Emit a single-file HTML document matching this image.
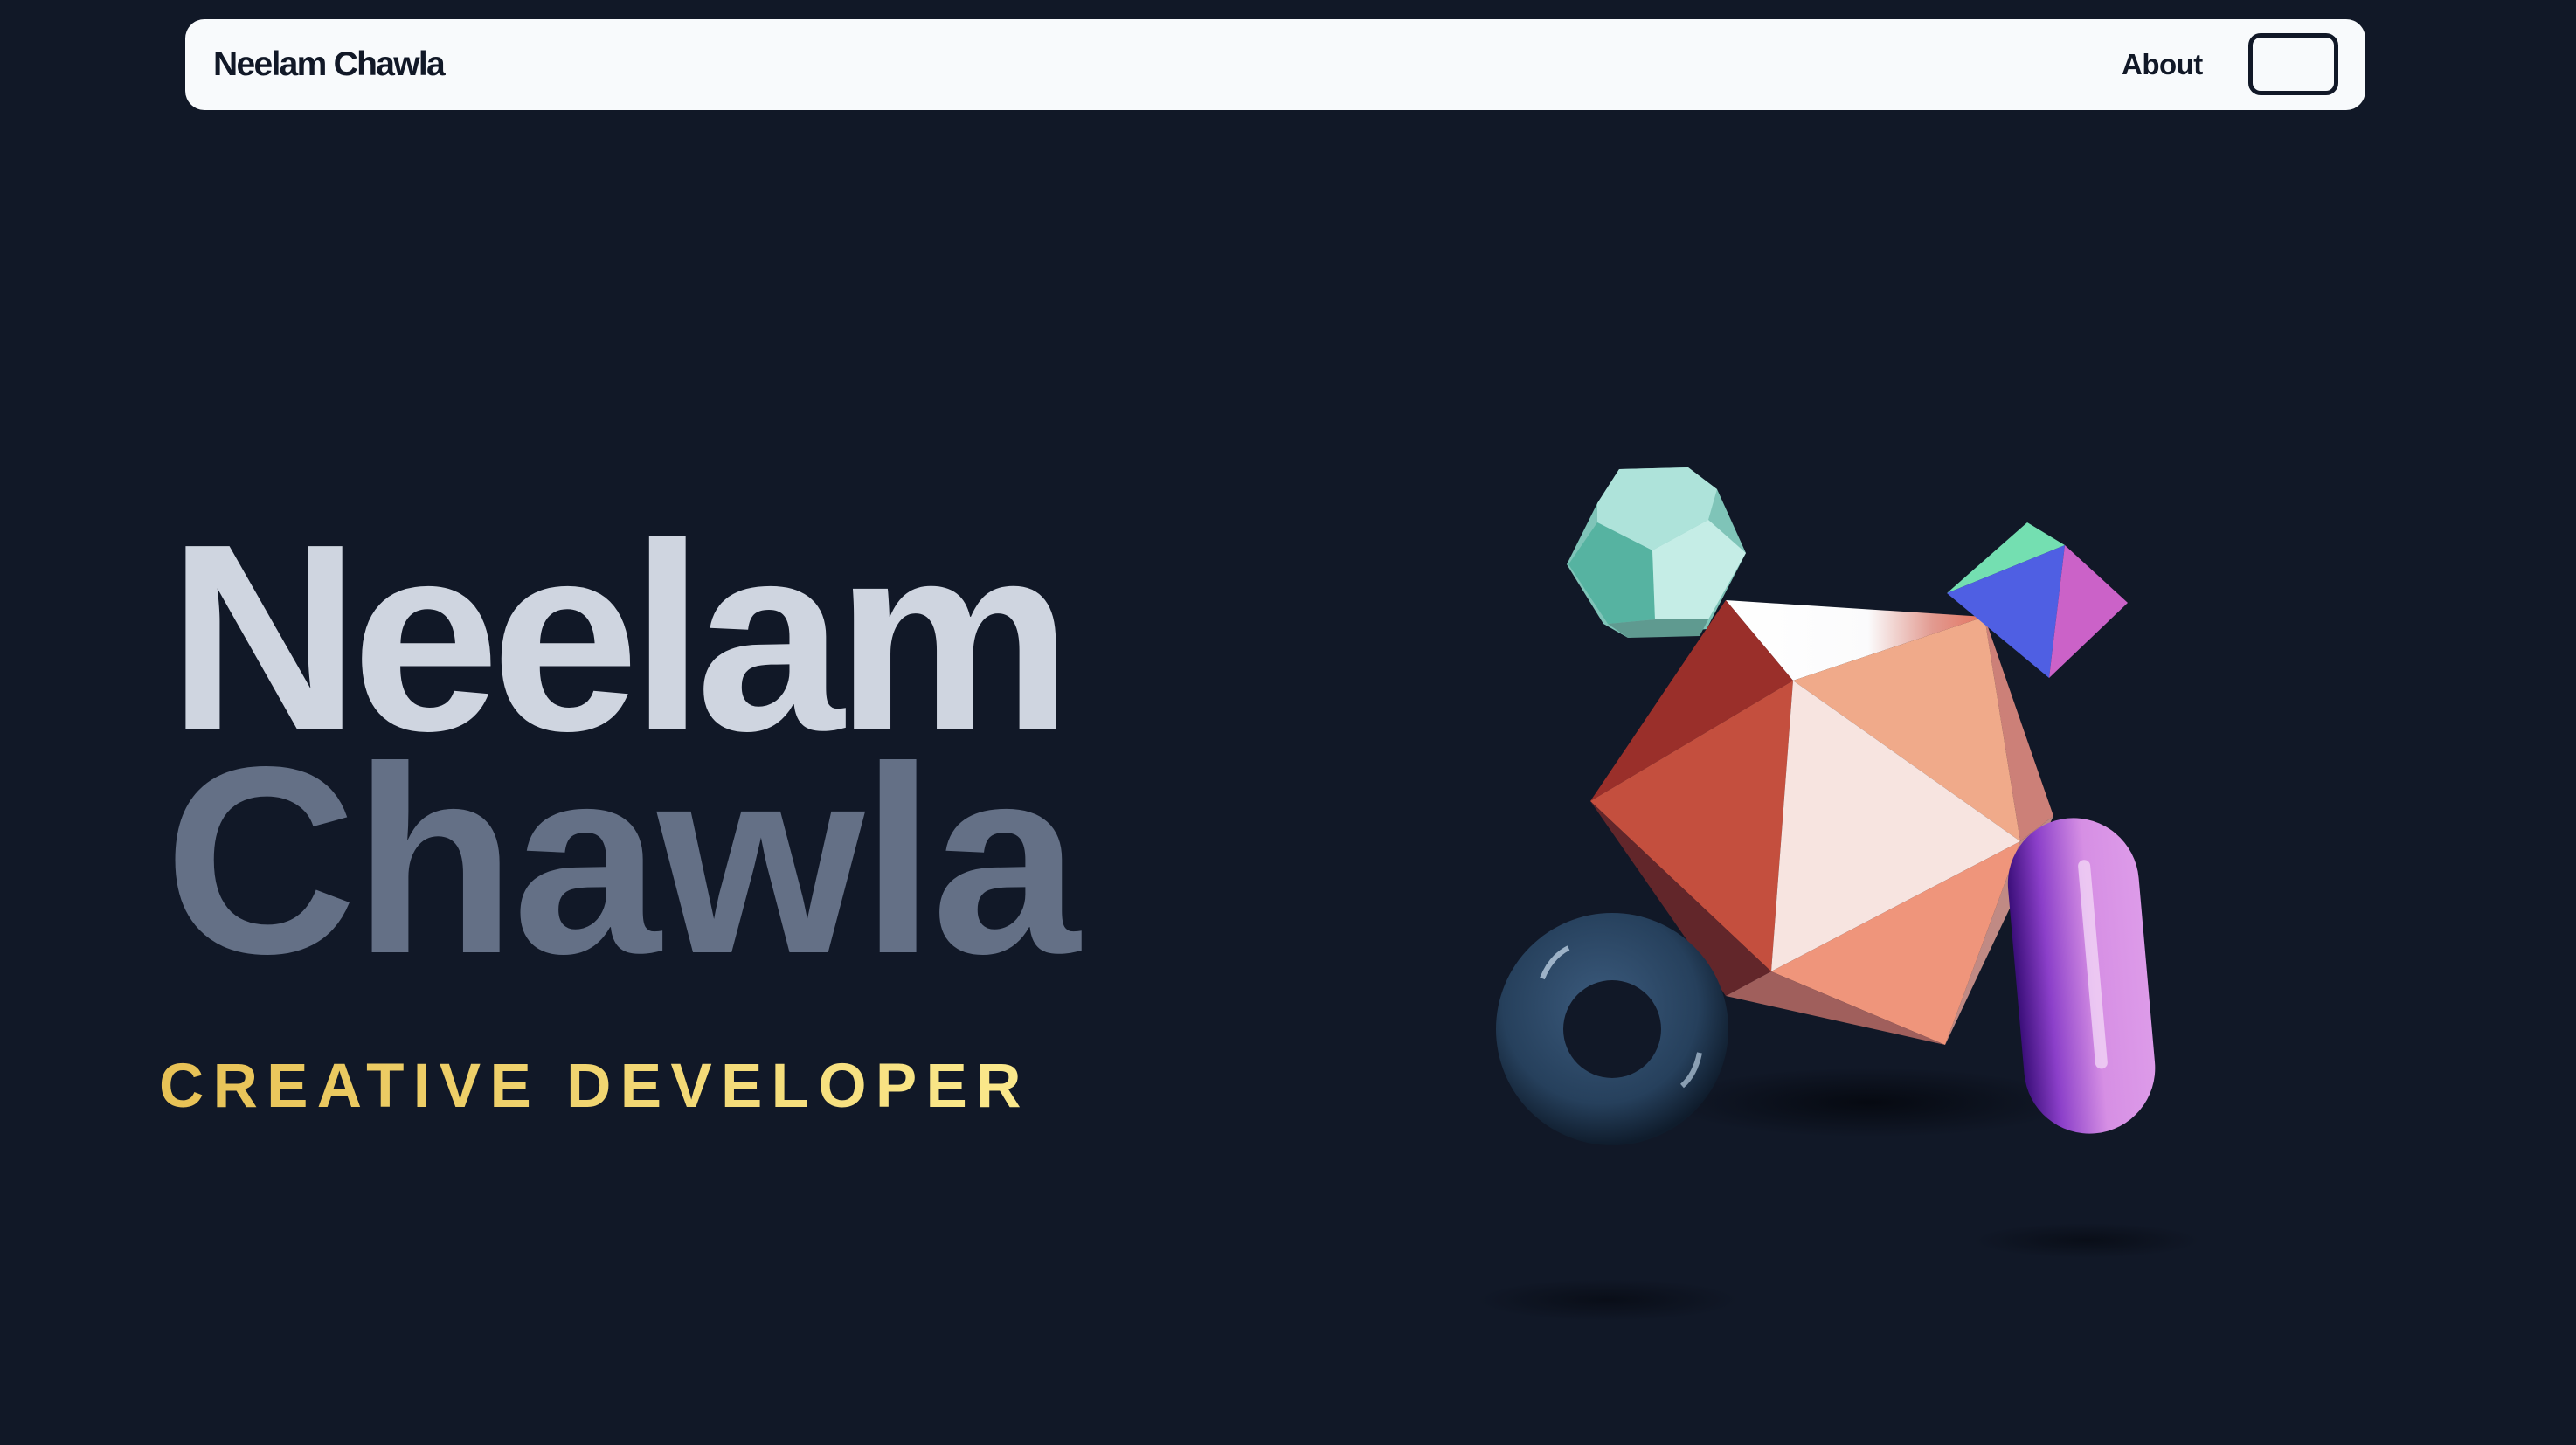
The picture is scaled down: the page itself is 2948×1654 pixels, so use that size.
<!DOCTYPE html>
<html><head><meta charset="utf-8"><style>
html,body{margin:0;padding:0;width:2948px;height:1654px;overflow:hidden;background:#111827;font-family:"Liberation Sans",sans-serif;}
.nav{position:absolute;left:212px;top:22px;width:2495px;height:104px;background:#f8fafc;border-radius:22px;}
.logo{position:absolute;left:244px;top:48px;font-size:39px;font-weight:bold;color:#111827;letter-spacing:-1.7px;line-height:52px;}
.about{position:absolute;left:2428px;top:54px;font-size:33px;font-weight:bold;color:#111827;line-height:40px;letter-spacing:-0.5px;}
.btn{position:absolute;left:2573px;top:38px;width:93px;height:61px;border:5px solid #111827;border-radius:14px;}
.big{position:absolute;font-weight:bold;font-size:305px;letter-spacing:-10px;line-height:1;}
.n1{left:192px;top:577px;color:#cfd5e0;}
.n2{left:188px;top:832px;color:#647086;letter-spacing:-4px;}
.sub{position:absolute;left:182px;top:1204px;font-size:71px;font-weight:bold;letter-spacing:10.3px;line-height:80px;background:linear-gradient(90deg,#e7c155,#fbe98c);-webkit-background-clip:text;color:transparent;}
svg{position:absolute;left:0;top:0;}
</style></head><body>
<div class="nav"></div>
<div class="logo">Neelam Chawla</div>
<div class="about">About</div>
<div class="btn"></div>
<div class="big n1">Neelam</div>
<div class="big n2">Chawla</div>
<div class="sub">CREATIVE DEVELOPER</div>
<svg width="2948" height="1654" viewBox="0 0 2948 1654">
<defs>
<radialGradient id="sh" cx="50%" cy="50%" r="50%"><stop offset="0" stop-color="#05080f" stop-opacity=".9"/><stop offset="1" stop-color="#05080f" stop-opacity="0"/></radialGradient>
<linearGradient id="wt" x1="0" x2="1"><stop offset="0" stop-color="#fff"/><stop offset=".55" stop-color="#fbfbfc"/><stop offset=".8" stop-color="#e29a90"/><stop offset="1" stop-color="#e4735f"/></linearGradient>
<linearGradient id="cap" x1="0" x2="1"><stop offset="0" stop-color="#3b0f7a"/><stop offset=".25" stop-color="#8b3fc9"/><stop offset=".6" stop-color="#d68fe4"/><stop offset="1" stop-color="#dd9be9"/></linearGradient>
<radialGradient id="tor" cx="45%" cy="40%" r="60%"><stop offset="0" stop-color="#3b5a7c"/><stop offset=".7" stop-color="#26405c"/><stop offset="1" stop-color="#0f1c2c"/></radialGradient>
</defs>
<ellipse cx="2140" cy="1262" rx="230" ry="40" fill="url(#sh)"/>
<ellipse cx="2388" cy="1420" rx="130" ry="20" fill="url(#sh)" opacity=".7"/>
<ellipse cx="1840" cy="1488" rx="150" ry="24" fill="url(#sh)" opacity=".7"/>
<polygon points="1975,687 2271,706 2052,779" fill="url(#wt)"/>
<polygon points="2271,706 2350,934 2312,963" fill="#cc8078"/>
<polygon points="2312,963 2350,934 2226,1196" fill="#c08a84"/>
<polygon points="1975,687 2052,779 1820,917" fill="#9a2f2a"/>
<polygon points="2052,779 1820,917 2027,1112" fill="#c44f3e"/>
<polygon points="2052,779 2271,706 2312,963" fill="#f0aa8a"/>
<polygon points="2052,779 2312,963 2027,1112" fill="#f7e4e0"/>
<polygon points="2027,1112 2312,963 2226,1196" fill="#ef957b"/>
<polygon points="1820,917 2027,1112 1975,1140" fill="#62262a"/>
<polygon points="1975,1140 2027,1112 2226,1196" fill="#a05f5c"/>
<polygon points="1853,537 1932,535 1965,560 1998,633 1953,720 1863,730 1835,714 1793,646 1828,576" fill="#7fc4b8"/>
<polygon points="1853,537 1932,535 1965,560 1955,595 1891,630 1828,598 1828,576" fill="#aee3da"/>
<polygon points="1828,598 1891,630 1894,709 1840,714 1795,646" fill="#56b3a1"/>
<polygon points="1891,630 1955,595 1998,633 1955,709 1894,709" fill="#c5ede6"/>
<polygon points="1840,714 1894,709 1955,709 1945,728 1863,730" fill="#5f9a90"/>
<polygon points="2320,598 2363,624 2228,679" fill="#74dfb1"/>
<polygon points="2228,679 2363,624 2345,776" fill="#4f5fe3"/>
<polygon points="2363,624 2435,690 2345,776" fill="#cb62c8"/>
<path fill-rule="evenodd" fill="url(#tor)" d="M1712,1178a133,133 0 1,0 266,0a133,133 0 1,0 -266,0z M1789,1178a56,56 0 1,0 112,0a56,56 0 1,0 -112,0z"/>
<path d="M1765,1120 q10,-25 30,-35" stroke="#b9cde0" stroke-width="6" fill="none" opacity=".8"/>
<path d="M1945,1205 q-5,25 -20,38" stroke="#b9cde0" stroke-width="6" fill="none" opacity=".7"/>
<g transform="rotate(-5 2382 1116)">
<rect x="2307" y="936" width="150" height="362" rx="75" fill="url(#cap)"/>
<rect x="2389" y="985" width="14" height="240" rx="7" fill="#f3d9f7" opacity=".75"/>
</g>
</svg>
</body></html>
